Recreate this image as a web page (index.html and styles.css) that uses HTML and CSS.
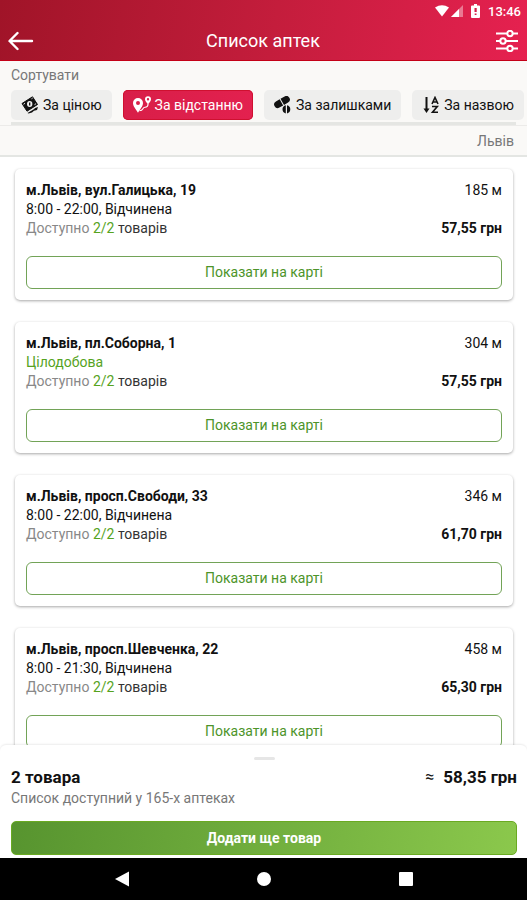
FILE: index.html
```html
<!DOCTYPE html>
<html lang="uk">
<head>
<meta charset="utf-8">
<meta name="viewport" content="width=device-width, initial-scale=1">
<title>Список аптек</title>
<link rel="stylesheet" href="styles.css">
</head>
<body>
<header class="header">
  <div class="status">
    <svg width="14" height="12" viewBox="0 0 14 12" fill="#fff"><path d="M0 2.6Q7-2 14 2.6L7 11.6Z"/></svg>
    <svg class="signal" width="12" height="12" viewBox="0 0 12 12" fill="#fff"><path d="M12 0V12H0Z" opacity=".4"/><path d="M8 4V12H0Z"/></svg>
    <svg class="battery" width="9" height="14" viewBox="0 0 9 14"><path d="M3 0H6V1.500H8Q9 1.500 9 2.500V13Q9 14 8 14H1Q0 14 0 13V2.500Q0 1.500 1 1.500H3Z" fill="#fff"/><path d="M3.500 4H5.700V8H3.500ZM3.700 9.500H5.500V11H3.700Z" fill="#d42049"/></svg>
    <time class="clock">13:46</time>
  </div>
  <div class="bar">
    <button class="icon-button" type="button" aria-label="Назад">
      <svg width="26" height="20" viewBox="0 0 26 20" fill="none" stroke="#fff" stroke-width="2.400" stroke-linecap="round" stroke-linejoin="round"><path d="M9.500 2L1.500 10L9.500 18M1.800 10H24"/></svg>
    </button>
    <h1 class="title">Список аптек</h1>
    <button class="icon-button filter" type="button" aria-label="Фільтри">
      <svg width="22" height="22" viewBox="0 0 22 22" fill="none" stroke="#fff" stroke-width="2"><path d="M0 3.500H11M17 3.500H22M0 11H4M10 11H22M0 18.500H11M17 18.500H22"/><circle cx="14" cy="3.500" r="2.700"/><circle cx="7" cy="11" r="2.700"/><circle cx="14" cy="18.500" r="2.700"/></svg>
    </button>
  </div>
</header>

<section class="sort">
  <h2 class="sort-label">Сортувати</h2>
  <div class="chips">
    <button class="chip" type="button">
      <svg width="18" height="18" viewBox="0 0 18 18"><path d="M1 7.500L11.500 .8L16.500 8.500L6 15.200Z" fill="#111" stroke="#111" stroke-linejoin="round"/><path d="M6.500 17L12.500 13.500Q13.500 11.500 17 11L16 14Q12.500 14 11 16.500L7.500 17.500Z" fill="#111"/><ellipse cx="8.700" cy="8" rx="2.700" ry="2.900" fill="#eee"/><path d="M8.700 6.500V9.500" stroke="#111" stroke-width="1.300"/><path d="M2.500 8.300L4 7.300M13.500 8.700L15 7.700M10.500 2.800L11.700 2" stroke="#eee" stroke-width="1"/></svg>
      <span>За ціною</span>
    </button>
    <button class="chip chip-active" type="button">
      <svg width="18" height="18" viewBox="0 0 18 18"><path fill="#fff" fill-rule="evenodd" d="M5 2A5 5 0 0 0 0 7C0 10.500 3 13 5 16.800C7 13 10 10.500 10 7A5 5 0 0 0 5 2ZM5 5A2 2 0 1 1 5 9A2 2 0 0 1 5 5ZM15 .3A3 3 0 0 0 12 3.300C12 5.300 14 6.800 15 8.500C16 6.800 18 5.300 18 3.300A3 3 0 0 0 15 .3ZM15 2A1.200 1.200 0 1 1 15 4.400A1.200 1.200 0 0 1 15 2Z"/><path d="M6.500 14.800C11 14.500 9 11.200 12 11.200C14.500 11.200 15 10 15 8" fill="none" stroke="#fff" stroke-width="1.100"/></svg>
      <span>За відстанню</span>
    </button>
    <button class="chip" type="button">
      <svg width="18" height="18" viewBox="0 0 18 18" fill="#111"><g transform="rotate(-30 8 6)"><path d="M3 2.500H7.300V9.500H3A3.500 3.500 0 0 1 3 2.500ZM8.300 2.500H13A3.500 3.500 0 0 1 13 9.500H8.300Z"/></g><path d="M11.800 9.200V17.400A4.200 4.200 0 0 1 11.800 9.200ZM13 9.200A4.200 4.200 0 0 1 13 17.400Z"/></svg>
      <span>За залишками</span>
    </button>
    <button class="chip" type="button">
      <svg width="18" height="18" viewBox="0 0 18 18" fill="none" stroke="#111"><path d="M4.500 1V15" stroke-width="2"/><path d="M1.500 12.500H7.500L4.500 17Z" fill="#111" stroke="none"/><path d="M10 8L13 1.500L16 8M11 6H15M10 10.500H15.300L10.500 16.200H16" stroke-width="1.600"/></svg>
      <span>За назвою</span>
    </button>
  </div>
  <div class="scroll-line"></div>
</section>
<div class="city">Львів</div>

<main class="list">
  <article class="card">
    <div class="row"><h3 class="address">м.Львів, вул.Галицька, 19</h3><span>185 м</span></div>
    <p class="hours">8:00 - 22:00, Відчинена</p>
    <div class="row"><p class="stock">Доступно <span class="count">2/2</span> <span class="goods">товарів</span></p><strong class="price">57,55 грн</strong></div>
    <button class="map-button" type="button">Показати на карті</button>
  </article>
  <article class="card">
    <div class="row"><h3 class="address">м.Львів, пл.Соборна, 1</h3><span>304 м</span></div>
    <p class="hours always">Цілодобова</p>
    <div class="row"><p class="stock">Доступно <span class="count">2/2</span> <span class="goods">товарів</span></p><strong class="price">57,55 грн</strong></div>
    <button class="map-button" type="button">Показати на карті</button>
  </article>
  <article class="card">
    <div class="row"><h3 class="address">м.Львів, просп.Свободи, 33</h3><span>346 м</span></div>
    <p class="hours">8:00 - 22:00, Відчинена</p>
    <div class="row"><p class="stock">Доступно <span class="count">2/2</span> <span class="goods">товарів</span></p><strong class="price">61,70 грн</strong></div>
    <button class="map-button" type="button">Показати на карті</button>
  </article>
  <article class="card">
    <div class="row"><h3 class="address">м.Львів, просп.Шевченка, 22</h3><span>458 м</span></div>
    <p class="hours">8:00 - 21:30, Відчинена</p>
    <div class="row"><p class="stock">Доступно <span class="count">2/2</span> <span class="goods">товарів</span></p><strong class="price">65,30 грн</strong></div>
    <button class="map-button" type="button">Показати на карті</button>
  </article>
</main>

<section class="sheet">
  <div class="handle"></div>
  <div class="row total"><strong>2 товара</strong><span class="sum"><span class="approx">≈</span><strong>58,35 грн</strong></span></div>
  <p class="note">Список доступний у 165-х аптеках</p>
  <button class="add-button" type="button">Додати ще товар</button>
</section>

<nav class="system">
  <button class="icon-button" type="button" aria-label="Назад"><svg width="14" height="16" viewBox="0 0 14 16"><path d="M14 .5V15.500L0 8Z" fill="#fff"/></svg></button>
  <button class="icon-button" type="button" aria-label="Додому"><svg width="14" height="14" viewBox="0 0 14 14"><circle cx="7" cy="7" r="7" fill="#fff"/></svg></button>
  <button class="icon-button" type="button" aria-label="Огляд"><svg width="14" height="14" viewBox="0 0 14 14"><rect width="14" height="14" rx="1" fill="#fff"/></svg></button>
</nav>
</body>
</html>
```
FILE: styles.css
```css
* { box-sizing: border-box; }

body {
  margin: 0;
  height: 100vh;
  display: flex;
  flex-direction: column;
  overflow: hidden;
  background: #fff;
  color: #111;
  font: 14px/19px Roboto, sans-serif;
}

h1, h2, h3, p { margin: 0; font-size: inherit; }
button { font: inherit; cursor: pointer; }
svg { display: block; flex: none; }

.header {
  flex: none;
  color: #fff;
  background: linear-gradient(100deg, #a01428, #c41d3c 52%, #e62150);
  border-bottom: 1px solid #c40018;
}
.status {
  display: flex;
  align-items: center;
  justify-content: flex-end;
  height: 22px;
  padding-right: 6px;
}
.signal { margin-left: 2px; }
.battery { margin: 0 8px; }
.clock { font-weight: 500; font-size: 13px; }
.bar {
  display: grid;
  grid-template-columns: 1fr auto 1fr;
  align-items: center;
  height: 38px;
  padding: 0 9px 0 8px;
}
.title { font-size: 18px; font-weight: 400; line-height: 24px; }
.icon-button { padding: 0; border: 0; background: none; justify-self: start; }
.filter { justify-self: end; }

.sort {
  flex: none;
  padding: 5px 0 0 11px;
  background: #faf9f7;
  border-bottom: 1px solid #ecebe9;
  overflow: hidden;
}
.sort-label { color: #777; font-weight: 400; }
.chips { display: flex; gap: 11px; padding-top: 5px; }
.chip {
  flex: none;
  display: flex;
  align-items: center;
  gap: 4px;
  height: 30px;
  padding: 0 10px;
  border: 0;
  border-radius: 5px;
  background: #eeeeed;
  color: #111;
  white-space: nowrap;
}
.chip-active {
  background: linear-gradient(100deg, #d81e48, #e3214f);
  box-shadow: inset 0 0 0 1px #cf1030;
  color: #fff;
}
.scroll-line { height: 3px; margin: 2px 11px 0 0; background: #e5e6e3; }

.city {
  flex: none;
  height: 31px;
  padding: 0 13px;
  background: #faf9f7;
  border-bottom: 2px solid #e4e6e3;
  color: #777;
  line-height: 30px;
  text-align: right;
}

.list {
  flex: 1;
  min-height: 0;
  overflow: hidden;
  display: flex;
  flex-direction: column;
  gap: 22px;
  padding: 12px 14px 0 15px;
}
.card {
  flex: none;
  padding: 12px 11px 11px;
  border-radius: 5px;
  background: #fff;
  box-shadow: 0 1px 3px rgba(0, 0, 0, .35);
}
.row { display: flex; justify-content: space-between; }
.address { font-weight: 700; }
.stock { color: #888; }
.count, .always { color: #56a31e; }
.goods { color: #333; }
.price { font-weight: 700; }
.map-button {
  display: block;
  width: 100%;
  height: 33px;
  margin-top: 18px;
  border: 1px solid #72a357;
  border-radius: 6px;
  background: #fff;
  color: #4d942a;
}

.sheet {
  flex: none;
  position: relative;
  padding: 12px 10px 3px 11px;
  border-radius: 6px 6px 0 0;
  background: #fff;
  box-shadow: 0 -1px 2px rgba(0, 0, 0, .08);
}
.handle { width: 21px; height: 3px; margin: 0 auto; border-radius: 2px; background: #e6e6e6; }
.total { margin-top: 5px; font-size: 17px; line-height: 24px; }
.total strong { font-weight: 700; }
.sum { display: flex; gap: 9px; }
.approx { font-size: 16px; }
.note { color: #777; }
.add-button {
  display: block;
  width: 100%;
  height: 34px;
  margin-top: 13px;
  border: 1px solid #6aaa22;
  border-radius: 5px;
  background: linear-gradient(100deg, #57942f, #8bc84c);
  color: #fff;
  font-weight: 700;
}

.system {
  flex: none;
  display: flex;
  align-items: center;
  justify-content: center;
  gap: 128px;
  height: 42px;
  background: #000;
}
```
